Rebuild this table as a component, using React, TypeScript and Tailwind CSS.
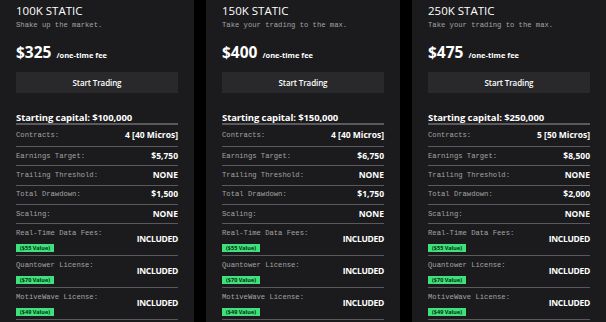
import React from 'react';

type Row = { label: string; value: string; badge?: string };

type Plan = {
  title: string;
  tagline: string;
  price: string;
  capital: string;
  rows: Row[];
};

const plans: Plan[] = [
  {
    title: '100K STATIC',
    tagline: 'Shake up the market.',
    price: '$325',
    capital: '$100,000',
    rows: [
      { label: 'Contracts:', value: '4 [40 Micros]' },
      { label: 'Earnings Target:', value: '$5,750' },
      { label: 'Trailing Threshold:', value: 'NONE' },
      { label: 'Total Drawdown:', value: '$1,500' },
      { label: 'Scaling:', value: 'NONE' },
      { label: 'Real-Time Data Fees:', value: 'INCLUDED', badge: '($55 Value)' },
      { label: 'Quantower License:', value: 'INCLUDED', badge: '($70 Value)' },
      { label: 'MotiveWave License:', value: 'INCLUDED', badge: '($49 Value)' },
    ],
  },
  {
    title: '150K STATIC',
    tagline: 'Take your trading to the max.',
    price: '$400',
    capital: '$150,000',
    rows: [
      { label: 'Contracts:', value: '4 [40 Micros]' },
      { label: 'Earnings Target:', value: '$6,750' },
      { label: 'Trailing Threshold:', value: 'NONE' },
      { label: 'Total Drawdown:', value: '$1,750' },
      { label: 'Scaling:', value: 'NONE' },
      { label: 'Real-Time Data Fees:', value: 'INCLUDED', badge: '($55 Value)' },
      { label: 'Quantower License:', value: 'INCLUDED', badge: '($70 Value)' },
      { label: 'MotiveWave License:', value: 'INCLUDED', badge: '($49 Value)' },
    ],
  },
  {
    title: '250K STATIC',
    tagline: 'Take your trading to the max.',
    price: '$475',
    capital: '$250,000',
    rows: [
      { label: 'Contracts:', value: '5 [50 Micros]' },
      { label: 'Earnings Target:', value: '$8,500' },
      { label: 'Trailing Threshold:', value: 'NONE' },
      { label: 'Total Drawdown:', value: '$2,000' },
      { label: 'Scaling:', value: 'NONE' },
      { label: 'Real-Time Data Fees:', value: 'INCLUDED', badge: '($55 Value)' },
      { label: 'Quantower License:', value: 'INCLUDED', badge: '($70 Value)' },
      { label: 'MotiveWave License:', value: 'INCLUDED', badge: '($49 Value)' },
    ],
  },
];

const sans = 'font-["Open_Sans","Noto_Sans",sans-serif]';
const mono = 'font-["Liberation_Mono","DejaVu_Sans_Mono",monospace]';

function PlanCard({ plan }: { plan: Plan }) {
  return (
    <div className="flex-1 min-w-0 bg-[#1b1b1d] px-4 pt-[3px]">
      {/* Header */}
      <h2 className={`${sans} text-[11.5px] leading-[16px] text-white`}>{plan.title}</h2>
      <p className={`${mono} mt-[1px] text-[7.2px] leading-[10px] text-[#a3a3a3]`}>{plan.tagline}</p>

      <div className="mt-[12px] flex items-baseline gap-[5px] h-[20px]">
        <span className={`${sans} text-[15.5px] leading-[20px] font-bold text-white`}>{plan.price}</span>
        <span className={`${sans} text-[7.5px] leading-[10px] font-bold text-white`}>/one-time fee</span>
      </div>

      <button
        className={`${sans} mt-[10px] block w-full h-[21px] bg-[#29292c] text-[8px] tracking-[-0.1px] font-semibold text-white`}
      >
        Start Trading
      </button>

      {/* Details */}
      <div className="mt-[19px]">
        <div
          className={`${sans} h-[13px] border-b-2 border-[#5a5a5e] text-[9.5px] leading-[11px] tracking-[-0.1px] font-bold text-white`}
        >
          Starting capital: {plan.capital}
        </div>
        {plan.rows.map((row, i) => (
          <div
            key={row.label}
            className={`flex items-center justify-between border-b border-[#5a5a5e] ${
              row.badge ? 'h-[32px]' : i === 0 ? 'h-[22px]' : 'h-[19.3px]'
            }`}
          >
            {row.badge ? (
              <div className="self-stretch flex flex-col items-start gap-[6px] pt-[5px]">
                <span className={`${mono} text-[7.2px] leading-[9px] text-[#a3a3a3]`}>{row.label}</span>
                <span
                  className={`${sans} bg-[#3ee17a] px-[4px] text-[5.5px] leading-[8px] font-bold text-[#0b2a14]`}
                >
                  {row.badge}
                </span>
              </div>
            ) : (
              <span className={`${mono} text-[7.2px] text-[#a3a3a3]`}>{row.label}</span>
            )}
            <span
              className={`${sans} text-[8.5px] font-bold text-white ${
                row.badge ? 'tracking-[-0.3px]' : ''
              }`}
            >
              {row.value}
            </span>
          </div>
        ))}
      </div>
    </div>
  );
}

export default function App() {
  return (
    <div className="w-[606px] h-[322px] overflow-hidden bg-black flex gap-3">
      {plans.map((plan) => (
        <PlanCard key={plan.title} plan={plan} />
      ))}
    </div>
  );
}
